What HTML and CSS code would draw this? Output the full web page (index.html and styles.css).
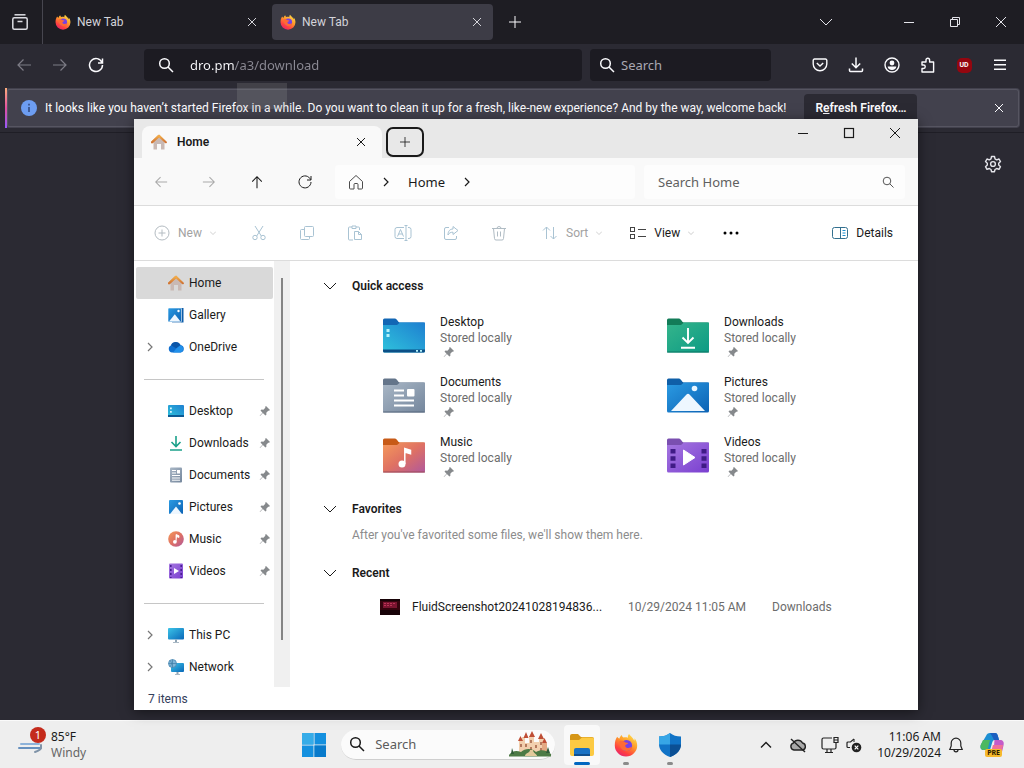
FILE: index.html
```html
<!DOCTYPE html>
<html lang="en">
<head>
  <meta charset="UTF-8" />
  <meta name="viewport" content="width=device-width, initial-scale=1" />
  <title>Desktop</title>
  <link rel="stylesheet" href="styles.css">
</head>
<body>

<!-- Shared icons -->
<svg class="sprite" aria-hidden="true">
  <defs>
    <linearGradient id="g-blue" x1="0" y1="0" x2="1" y2="1"><stop offset="0" stop-color="#3cc4e8"/><stop offset="1" stop-color="#0967b8"/></linearGradient>
    <linearGradient id="g-desk" x1="1" y1="0" x2="0" y2="1"><stop offset="0" stop-color="#1e7fd0"/><stop offset="1" stop-color="#2fc3dc"/></linearGradient>
    <linearGradient id="g-green" x1="0" y1="0" x2="1" y2="1"><stop offset="0" stop-color="#35b58b"/><stop offset="1" stop-color="#0c9a84"/></linearGradient>
    <linearGradient id="g-gray" x1="0" y1="0" x2="1" y2="1"><stop offset="0" stop-color="#a9b7c6"/><stop offset="1" stop-color="#74869c"/></linearGradient>
    <linearGradient id="g-pic" x1="0" y1="0" x2="1" y2="1"><stop offset="0" stop-color="#2b9be3"/><stop offset="1" stop-color="#0c62b4"/></linearGradient>
    <linearGradient id="g-music" x1="0" y1="0" x2="1" y2="1"><stop offset="0" stop-color="#f59a5a"/><stop offset=".5" stop-color="#df7163"/><stop offset="1" stop-color="#b0589c"/></linearGradient>
    <linearGradient id="g-video" x1="0" y1="0" x2="1" y2="1"><stop offset="0" stop-color="#a577e0"/><stop offset="1" stop-color="#7a3fd0"/></linearGradient>
    <linearGradient id="g-fox" x1=".8" y1="0" x2=".2" y2="1"><stop offset="0" stop-color="#ffe24a"/><stop offset=".4" stop-color="#ff9a2a"/><stop offset=".75" stop-color="#ff4040"/><stop offset="1" stop-color="#e0207a"/></linearGradient>
    <linearGradient id="g-roof" x1="0" y1="0" x2="0" y2="1"><stop offset="0" stop-color="#f3ad48"/><stop offset="1" stop-color="#cf7436"/></linearGradient>
  </defs>
  <symbol id="i-firefox" viewBox="0 0 24 24">
    <path d="M15 1c-1 1.200-1.300 2.400-1 3.700-1.400-.5-3-.6-4.400-.1C8.500 3.900 7.900 3 7.800 2 6.500 3 5.700 4.200 5.500 5.500 4.300 5.300 3.600 4.600 3.200 3.800 1.600 6 .8 8.700.8 12.500a11.200 11 0 0 0 22.400 0c0-3-1-5.600-2.700-7.300.2 1 .1 1.800-.2 2.500C19.200 4.500 16.400 3.400 15 1z" fill="url(#g-fox)"/>
    <circle cx="12.500" cy="12.500" r="5.600" fill="#7542e5"/>
    <path d="M5.500 8c2.500-.6 4.500 0 6 1.500l2.800.4c-.5 1.400-2.300 1.300-3 2.400-.4 1.500 1 3 3.200 2.600 1.500-.3 2.600-.9 3.800-.4-1.400 3.200-5.400 4.500-8.800 2.800C6.500 15.800 5 12 5.500 8z" fill="#ff6a34"/>
  </symbol>
  <symbol id="i-close" viewBox="0 0 12 12"><path d="M2 2l8 8M10 2l-8 8" fill="none" stroke="currentColor"/></symbol>
  <symbol id="i-plus" viewBox="0 0 12 12"><path d="M6 0v12M0 6h12" fill="none" stroke="currentColor"/></symbol>
  <symbol id="i-down" viewBox="0 0 12 12"><path d="M0 3l6 6 6-6" fill="none" stroke="currentColor"/></symbol>
  <symbol id="i-right" viewBox="0 0 12 12"><path d="M4 2l4 4-4 4" fill="none" stroke="currentColor" stroke-width="1.200"/></symbol>
  <symbol id="i-min" viewBox="0 0 12 12"><path d="M1 6.500h10" fill="none" stroke="currentColor"/></symbol>
  <symbol id="i-back" viewBox="0 0 16 16"><path d="M15 8H2M7.500 2.500L2 8l5.500 5.500" fill="none" stroke="currentColor" stroke-width="1.200"/></symbol>
  <symbol id="i-search" viewBox="0 0 16 16"><circle cx="6.500" cy="6.500" r="4.800" fill="none" stroke="currentColor" stroke-width="1.500"/><path d="M10 10l5 5" stroke="currentColor" stroke-width="1.500"/></symbol>
  <symbol id="i-reload" viewBox="0 0 16 16"><path d="M14 5.500A6.500 6.500 0 1 0 14.500 8M14.500 1.500v4.500H10" fill="none" stroke="currentColor" stroke-width="1.500"/></symbol>
  <symbol id="i-reload-thin" viewBox="0 0 16 16"><path d="M13.500 5.500A6 6 0 1 0 14 8M14 2v4h-4" fill="none" stroke="currentColor"/></symbol>
  <symbol id="i-pin" viewBox="0 0 12 12"><path d="M7 1l4 4-1 .8-.8-.1-1.900 2 .1 2-1 .9-2.500-2.500L1 11l-.3-.3L3.500 7.800 1.500 5.600l1-1 1.900.1 1.900-1.900L6.200 1.800z" fill="#86898c"/></symbol>
  <symbol id="i-house" viewBox="0 0 16 16">
    <path d="M2.500 8L8 3l5.500 5v7.500H10V10H6v5.500H2.500z" fill="#c9b9b4"/>
    <path d="M8 1.800L1 8.300" stroke="#dd8b3d" stroke-width="2.200" stroke-linecap="round"/>
    <path d="M1.200 8.200L8 1.900l6.800 6.300" fill="none" stroke="url(#g-roof)" stroke-width="2.200" stroke-linecap="round" stroke-linejoin="round"/>
  </symbol>
  <symbol id="i-pictures" viewBox="0 0 16 16"><rect x="1" y="1" width="14" height="14" rx="1" fill="url(#g-pic)"/><path d="M2 15l6-7.500 6 7.500z" fill="#eef7ff"/><circle cx="11.500" cy="4.500" r="1.300" fill="#fff"/></symbol>
  <symbol id="i-monitor" viewBox="0 0 16 16"><rect y="1" width="16" height="11.500" rx="1" fill="url(#g-blue)"/><path d="M7 12.500h2V15h2v.8H5V15h2z" fill="#8fa3b3"/></symbol>
  <symbol id="i-folder" viewBox="0 0 42 35"><path d="M0 2a1.500 1.500 0 0 1 1.500-1.500H12c2 0 3 4 5 4h23.500A1.500 1.500 0 0 1 42 6v5H0z" fill="currentColor"/></symbol>
</svg>

<!-- Browser -->
<div class="browser">
  <div class="tabbar">
    <button class="tab-view" aria-label="Firefox View">
      <svg width="18" height="18" viewBox="0 0 18 18" fill="none" stroke="#dcdce2" stroke-width="1.500"><path d="M3.500 1.800h11"/><rect x="1.800" y="4.800" width="14.400" height="11.400" rx="1.500"/><path d="M6.500 8.500h5"/></svg>
    </button>
    <div class="tab">
      <svg class="ic16"><use href="#i-firefox"/></svg>
      <button class="tab-title">New Tab</button>
      <button class="tab-close" aria-label="Close tab"><svg class="ic12"><use href="#i-close"/></svg></button>
    </div>
    <div class="tab active">
      <svg class="ic16"><use href="#i-firefox"/></svg>
      <button class="tab-title">New Tab</button>
      <button class="tab-close" aria-label="Close tab"><svg class="ic12"><use href="#i-close"/></svg></button>
    </div>
    <button class="new-tab" aria-label="New tab"><svg class="ic12"><use href="#i-plus"/></svg></button>
    <div class="window-buttons">
      <button class="list-tabs" aria-label="List all tabs"><svg class="ic12"><use href="#i-down"/></svg></button>
      <button aria-label="Minimize"><svg class="ic12"><use href="#i-min"/></svg></button>
      <button aria-label="Restore"><svg class="ic12" viewBox="0 0 12 12" fill="none" stroke="currentColor"><path d="M1.500 3.500h7v7h-7zM3.500 3.500v-2h7v7h-2"/></svg></button>
      <button aria-label="Close"><svg class="ic12" viewBox="0 0 12 12" fill="none" stroke="currentColor"><path d="M1 1l10 10M11 1L1 11"/></svg></button>
    </div>
  </div>

  <div class="toolbar">
    <button class="dim" aria-label="Back"><svg class="ic16"><use href="#i-back"/></svg></button>
    <button class="dim" aria-label="Forward"><svg class="ic16 flip"><use href="#i-back"/></svg></button>
    <button aria-label="Reload"><svg class="ic16"><use href="#i-reload"/></svg></button>
    <div class="urlbar">
      <svg class="ic16"><use href="#i-search"/></svg>
      <input type="text" class="url-input" aria-label="Address" value="dro.pm/a3/download" />
    </div>
    <div class="searchbar">
      <svg class="ic16"><use href="#i-search"/></svg>
      <input type="text" aria-label="Web search" placeholder="Search" />
    </div>
    <div class="tools">
      <button aria-label="Pocket"><svg class="ic16" viewBox="0 0 16 16" fill="none" stroke="currentColor" stroke-width="1.400"><path d="M2.500 2h11a1.300 1.300 0 0 1 1.300 1.300V7a6.800 6.800 0 0 1-13.600 0V3.300A1.300 1.300 0 0 1 2.500 2z"/><path d="M4.800 6L8 9l3.200-3"/></svg></button>
      <button aria-label="Downloads"><svg class="ic16" viewBox="0 0 16 16" fill="none" stroke="currentColor" stroke-width="1.500"><path d="M8 .5v10M3.800 6.500L8 10.700l4.200-4.200M1.500 11.500v2a1 1 0 0 0 1 1h11a1 1 0 0 0 1-1v-2"/></svg></button>
      <button aria-label="Account"><svg class="ic16" viewBox="0 0 16 16"><circle cx="8" cy="8" r="7" fill="none" stroke="currentColor" stroke-width="1.400"/><circle cx="8" cy="6" r="2.400" fill="currentColor"/><path d="M3.700 9.500h8.600c0 2-2 3.500-4.300 3.500s-4.300-1.500-4.300-3.500z" fill="currentColor"/></svg></button>
      <button aria-label="Extensions"><svg class="ic16" viewBox="0 0 16 16" fill="none" stroke="currentColor" stroke-width="1.400" stroke-linejoin="round"><path d="M2 5h4V3a1.800 1.800 0 0 1 3.600 0v2h4v10H2v-3.500h1.500a1.600 1.600 0 0 0 0-3.500H2z"/></svg></button>
      <button aria-label="uBlock Origin"><span class="ublock">UD</span></button>
      <button aria-label="Menu"><svg class="ic16" viewBox="0 0 16 16" stroke="currentColor" stroke-width="1.500"><path d="M2 3.300h12M2 7.800h12M2 12.300h12"/></svg></button>
    </div>
  </div>

  <div class="infobar">
    <svg class="ic16" viewBox="0 0 16 16"><circle cx="8" cy="8" r="8" fill="#6d9df2"/><path d="M8 7v5M8 3.800v1.700" stroke="#2f4678" stroke-width="1.500"/></svg>
    <p>It looks like you haven’t started Firefox in a while. Do you want to clean it up for a fresh, like-new experience? And by the way, welcome back!</p>
    <button class="refresh">R<u>e</u>fresh Firefox…</button>
    <button class="infobar-close" aria-label="Dismiss"><svg class="ic12"><use href="#i-close"/></svg></button>
    <span class="ghost"></span>
  </div>

  <div class="page">
    <button class="gear" aria-label="Customize new tab">
      <svg width="18" height="18" viewBox="0 0 18 18" fill="none" stroke="#e4e4ea" stroke-width="1.400" stroke-linejoin="round"><path d="M7.500 1.500h3l.5 2.300 1.700 1 2.300-.8 1.500 2.600-1.800 1.600v1.900l1.800 1.600-1.500 2.600-2.300-.8-1.700 1-.5 2.200h-3L7 14.500l-1.700-1-2.300.8-1.500-2.600 1.800-1.600V8.200L1.500 6.600 3 4l2.300.8 1.700-1z"/><circle cx="9" cy="9" r="2.400"/></svg>
    </button>
  </div>
</div>

<!-- File Explorer window -->
<main class="explorer">
  <div class="titlebar">
    <div class="ex-tab">
      <svg class="ic16"><use href="#i-house"/></svg>
      <span>Home</span>
      <button aria-label="Close tab"><svg class="ic12"><use href="#i-close"/></svg></button>
    </div>
    <button class="ex-new" aria-label="Add new tab"><svg class="ic10"><use href="#i-plus"/></svg></button>
    <div class="ex-buttons">
      <button aria-label="Minimize"><svg class="ic12"><use href="#i-min"/></svg></button>
      <button aria-label="Maximize"><svg class="ic12" viewBox="0 0 12 12"><rect x="1.500" y="1.500" width="9" height="9" fill="none" stroke="currentColor" stroke-width="1.200"/></svg></button>
      <button aria-label="Close"><svg class="ic12" viewBox="0 0 12 12" fill="none" stroke="currentColor"><path d="M1 1l10 10M11 1L1 11"/></svg></button>
    </div>
  </div>

  <div class="navrow">
    <button class="off" aria-label="Back"><svg class="ic14"><use href="#i-back"/></svg></button>
    <button class="off" aria-label="Forward"><svg class="ic14 flip"><use href="#i-back"/></svg></button>
    <button aria-label="Up"><svg class="ic14 turn"><use href="#i-back"/></svg></button>
    <button aria-label="Refresh"><svg class="ic16"><use href="#i-reload-thin"/></svg></button>
    <nav class="address" aria-label="Path">
      <svg class="ic16" viewBox="0 0 16 16" fill="none" stroke="#4c4c4c"><path d="M1.500 7.500L8 1.500l6.500 6V14a1 1 0 0 1-1 1H10v-4.500a1 1 0 0 0-1-1H7a1 1 0 0 0-1 1V15H2.500a1 1 0 0 1-1-1z"/></svg>
      <svg class="ic12"><use href="#i-right"/></svg>
      <a href="#">Home</a>
      <svg class="ic12"><use href="#i-right"/></svg>
    </nav>
    <div class="ex-search">
      <input type="text" aria-label="Search Home" placeholder="Search Home" />
      <svg class="ic12" viewBox="0 0 12 12" fill="none" stroke="#555"><circle cx="5" cy="5" r="3.800"/><path d="M7.800 7.800l3.700 3.700"/></svg>
    </div>
  </div>

  <div class="commands">
    <button class="cmd-new" disabled><svg class="ic16" viewBox="0 0 16 16" fill="none" stroke="#b4bcc2"><circle cx="8" cy="8" r="7"/><path d="M8 4.500v7M4.500 8h7"/></svg>New<svg class="ic6"><use href="#i-down"/></svg></button>
    <button class="cmd" disabled aria-label="Cut"><svg class="ic16" viewBox="0 0 16 16" fill="none" stroke="#a9c3d3"><path d="M4 1l6.300 10M12 1L5.700 11"/><circle cx="4" cy="12.500" r="2.200"/><circle cx="12" cy="12.500" r="2.200"/></svg></button>
    <button class="cmd" disabled aria-label="Copy"><svg class="ic16" viewBox="0 0 16 16" fill="none" stroke="#a9c3d3"><rect x="5.500" y="1.500" width="9" height="10" rx="1"/><path d="M5.500 4.500h-3a1 1 0 0 0-1 1v8a1 1 0 0 0 1 1h7a1 1 0 0 0 1-1v-2"/></svg></button>
    <button class="cmd" disabled aria-label="Paste"><svg class="ic16" viewBox="0 0 16 16" fill="none" stroke="#a9c3d3"><path d="M6 15H2.500a1 1 0 0 1-1-1V3a1 1 0 0 1 1-1H5M9 2h2.500a1 1 0 0 1 1 1v2M5 1h4v2.500H5z"/><path d="M7.500 6.500h4l3 3v5h-7zM11.500 6.500v3h3"/></svg></button>
    <button class="cmd" disabled aria-label="Rename"><svg class="ic18" viewBox="0 0 18 16" fill="none" stroke="#a9c3d3"><path d="M10 2.500H3a2 2 0 0 0-2 2v7a2 2 0 0 0 2 2h7M14 2.500h1a2 2 0 0 1 2 2v7a2 2 0 0 1-2 2h-1M12 .5v15M10.500.5h3M10.500 15.500h3M3.500 11.500l3-7 3 7M4.500 9h4"/></svg></button>
    <button class="cmd" disabled aria-label="Share"><svg class="ic16" viewBox="0 0 16 16" fill="none" stroke="#a9c3d3"><path d="M6 2.500H3a1.500 1.500 0 0 0-1.500 1.500v9A1.500 1.500 0 0 0 3 14.500h9a1.500 1.500 0 0 0 1.500-1.500v-2M10 1.500l5 4-5 4v-2.300c-2.500 0-4 .8-5 2.800 0-4 2-6 5-6z"/></svg></button>
    <button class="cmd" disabled aria-label="Delete"><svg class="ic16" viewBox="0 0 16 16" fill="none" stroke="#b0bcc4"><path d="M1 3.500h14M6 3.500a2 2 0 0 1 4 0M2.500 3.500l1 10a1.500 1.500 0 0 0 1.500 1.500h6a1.500 1.500 0 0 0 1.500-1.500l1-10M6.500 6.500v5M9.500 6.500v5"/></svg></button>
    <button class="cmd-sort" disabled><svg class="ic16" viewBox="0 0 16 16" fill="none" stroke="#a9c3d3"><path d="M4.500 14V2M1 5.500L4.500 2 8 5.500M11.500 2v12M8.500 11l3 3 3-3"/></svg>Sort<svg class="ic6"><use href="#i-down"/></svg></button>
    <button class="cmd-view"><svg class="ic16" viewBox="0 0 16 16" fill="none" stroke="#444"><rect x=".5" y="2.500" width="4" height="4"/><rect x=".5" y="9.500" width="4" height="4"/><path d="M8 4.500h8M8 11.500h8"/></svg>View<svg class="ic6 faint"><use href="#i-down"/></svg></button>
    <button class="cmd-more" aria-label="See more"><svg width="18" height="4" viewBox="0 0 18 4"><circle cx="3" cy="2" r="1.500"/><circle cx="9" cy="2" r="1.500"/><circle cx="15" cy="2" r="1.500"/></svg></button>
    <button class="cmd-details"><svg class="ic16" viewBox="0 0 16 16" fill="none" stroke="#33708f"><rect x=".5" y="2.500" width="15" height="11" rx="2"/><path d="M8.500 2.500v11" /><path d="M10.500 5.500h3M10.500 8h3M10.500 10.500h3" stroke="#1f8fcf"/></svg>Details</button>
  </div>

  <div class="ex-body">
    <nav class="sidebar" aria-label="Folders">
      <a href="#" class="side selected"><svg class="ic16"><use href="#i-house"/></svg>Home</a>
      <a href="#" class="side"><svg class="ic16" viewBox="0 0 16 16"><path d="M4 1h11.500v14.500H4z" fill="#0d5ca8"/><rect y="1" width="13.500" height="14" rx="1" fill="url(#g-pic)" stroke="#fff" stroke-width=".6"/><path d="M1 14.500l5.800-7.200 5.700 7.200z" fill="#eef7ff"/><circle cx="10.500" cy="4" r="1.200" fill="#fff"/></svg>Gallery</a>
      <a href="#" class="side has-sub"><svg class="ic12"><use href="#i-right"/></svg><svg class="ic16" viewBox="0 0 16 16"><path d="M4 13.500a3.800 3.800 0 0 1-.8-7.300A5.200 5.200 0 0 1 12.500 6a3.800 3.800 0 0 1 .2 7.500z" fill="#0f6fd0"/><path d="M3 6.300A5.200 5.200 0 0 1 12.500 6l-4 3.600z" fill="#0b55a8"/><path d="M5 13.500l3.500-4.200 4-3a3.800 3.800 0 0 1 .2 7.200z" fill="#2290ea"/></svg>OneDrive</a>
      <hr>
      <a href="#" class="side"><svg class="ic16" viewBox="0 0 16 16"><rect y="2" width="16" height="12" rx="1" fill="url(#g-desk)"/><path d="M2 4.500h1.800v1.800H2zM2 8h1.800v1.800H2z" fill="#d8f6ff"/><path d="M0 12h16v2H0z" fill="#0c5a94"/></svg>Desktop<svg class="ic12 pin"><use href="#i-pin"/></svg></a>
      <a href="#" class="side"><svg class="ic16" viewBox="0 0 16 16" fill="none" stroke="#1ba18a" stroke-width="1.600"><path d="M8 1v10.500M3.500 7L8 11.500 12.500 7M2 15h12"/></svg>Downloads<svg class="ic12 pin"><use href="#i-pin"/></svg></a>
      <a href="#" class="side"><svg class="ic16" viewBox="0 0 16 16"><rect x="2" y=".5" width="12" height="15" rx="1" fill="url(#g-gray)"/><path d="M4 3.500h4M4 6h4M4 8.500h8M4 11h8M4 13.200h8" stroke="#fff"/><path d="M9 3h3v3.500H9z" fill="#fff"/></svg>Documents<svg class="ic12 pin"><use href="#i-pin"/></svg></a>
      <a href="#" class="side"><svg class="ic16"><use href="#i-pictures"/></svg>Pictures<svg class="ic12 pin"><use href="#i-pin"/></svg></a>
      <a href="#" class="side"><svg class="ic16" viewBox="0 0 16 16"><circle cx="8" cy="8" r="7.800" fill="url(#g-music)"/><path d="M8 10.500V3.500l3 1.200v1.800L9 5.800" fill="#fff" stroke="#fff" stroke-width=".8"/><circle cx="6.900" cy="10.800" r="1.900" fill="#fff"/></svg>Music<svg class="ic12 pin"><use href="#i-pin"/></svg></a>
      <a href="#" class="side"><svg class="ic16" viewBox="0 0 16 16"><rect x="1" y=".5" width="14" height="15" rx="1" fill="url(#g-video)"/><path d="M2.800 2v13M13.200 2v13" stroke="#4a1f94" stroke-width="1.600" stroke-dasharray="2 2"/><path d="M6 5l5 3-5 3z" fill="#fff"/></svg>Videos<svg class="ic12 pin"><use href="#i-pin"/></svg></a>
      <hr>
      <a href="#" class="side has-sub"><svg class="ic12"><use href="#i-right"/></svg><svg class="ic16"><use href="#i-monitor"/></svg>This PC</a>
      <a href="#" class="side has-sub"><svg class="ic12"><use href="#i-right"/></svg><svg class="ic16" viewBox="0 0 16 16"><rect x="3" y="4" width="13" height="9" rx="1" fill="url(#g-blue)"/><path d="M8.500 13h2v2h1.500v.8H7V15h1.500z" fill="#8fa3b3"/><circle cx="4.500" cy="4.500" r="4" fill="#7fb6d8" stroke="#4383ae" stroke-width=".7"/><path d="M.5 4.500h8M4.500.5v8M2 1.500c2 2 2 4 0 6" fill="none" stroke="#3f7ca6" stroke-width=".7"/></svg>Network</a>
    </nav>
    <div class="scroll"><div class="thumb"></div></div>

    <div class="content">
      <h2><svg class="ic12"><use href="#i-down"/></svg>Quick access</h2>
      <div class="tiles">
        <div class="tile">
          <svg class="folder" viewBox="0 0 42 35"><use href="#i-folder" color="#1266b4"/><path d="M0 7h14l3-2.500h25V33a1.500 1.500 0 0 1-1.500 1.500h-39A1.500 1.500 0 0 1 0 33z" fill="url(#g-desk)"/><path d="M0 31.500h42V33a1.500 1.500 0 0 1-1.500 1.500h-39A1.500 1.500 0 0 1 0 33z" fill="#0b4f86"/><path d="M3.500 11h3v3h-3zM3.500 16h3v3h-3zM33 32h2v1.800h-2zM37 32h2v1.800h-2z" fill="#b5f2fb"/></svg>
          <div class="tile-text"><span>Desktop</span><small>Stored locally</small><svg class="ic12"><use href="#i-pin"/></svg></div>
        </div>
        <div class="tile">
          <svg class="folder" viewBox="0 0 42 35"><use href="#i-folder" color="#137c58"/><path d="M0 7h14l3-2.500h25V33a1.500 1.500 0 0 1-1.500 1.500h-39A1.500 1.500 0 0 1 0 33z" fill="url(#g-green)"/><path d="M0 34h42" stroke="#0b7463"/><path d="M21 10v14.500M15.500 19.500l5.500 5.500 5.500-5.500M14 29.800h14" fill="none" stroke="#fff" stroke-width="1.900"/></svg>
          <div class="tile-text"><span>Downloads</span><small>Stored locally</small><svg class="ic12"><use href="#i-pin"/></svg></div>
        </div>
        <div class="tile">
          <svg class="folder" viewBox="0 0 42 35"><use href="#i-folder" color="#64758a"/><path d="M0 7h14l3-2.500h25V33a1.500 1.500 0 0 1-1.500 1.500h-39A1.500 1.500 0 0 1 0 33z" fill="url(#g-gray)"/><path d="M0 34h42" stroke="#56677c"/><path d="M11 12.500h10M11 17.500h10M11 22.500h20M11 27.500h20" stroke="#fff" stroke-width="2.200"/><rect x="24" y="11" width="7.500" height="7.500" rx="1" fill="#fff"/></svg>
          <div class="tile-text"><span>Documents</span><small>Stored locally</small><svg class="ic12"><use href="#i-pin"/></svg></div>
        </div>
        <div class="tile">
          <svg class="folder" viewBox="0 0 42 35"><use href="#i-folder" color="#0f5fa8"/><path d="M0 7h14l3-2.500h25V33a1.500 1.500 0 0 1-1.500 1.500h-39A1.500 1.500 0 0 1 0 33z" fill="url(#g-pic)"/><path d="M4 33l15.500-16.500a2 2 0 0 1 3 0L38 33z" fill="#eef7ff"/><circle cx="27.500" cy="10.500" r="2.800" fill="#e8f5ff"/></svg>
          <div class="tile-text"><span>Pictures</span><small>Stored locally</small><svg class="ic12"><use href="#i-pin"/></svg></div>
        </div>
        <div class="tile">
          <svg class="folder" viewBox="0 0 42 35"><use href="#i-folder" color="#c75a17"/><path d="M0 7h14l3-2.500h25V33a1.500 1.500 0 0 1-1.500 1.500h-39A1.500 1.500 0 0 1 0 33z" fill="url(#g-music)"/><path d="M0 34h42" stroke="#9a4a58"/><circle cx="19" cy="26" r="3.500" fill="#fff"/><path d="M21.800 26V10.500l5.700 1.800v3.500l-5.700-1.800" fill="#fff" stroke="#fff" stroke-width="1.500"/></svg>
          <div class="tile-text"><span>Music</span><small>Stored locally</small><svg class="ic12"><use href="#i-pin"/></svg></div>
        </div>
        <div class="tile">
          <svg class="folder" viewBox="0 0 42 35"><use href="#i-folder" color="#7a4fb0"/><path d="M0 7h14l3-2.500h25V33a1.500 1.500 0 0 1-1.500 1.500h-39A1.500 1.500 0 0 1 0 33z" fill="url(#g-video)"/><path d="M6 11v19M37 11v19" stroke="#401b86" stroke-width="5" stroke-dasharray="4.500 2.700"/><path d="M16.500 12l11.500 7.500-11.500 7.500z" fill="#fff" stroke="#fff" stroke-linejoin="round"/></svg>
          <div class="tile-text"><span>Videos</span><small>Stored locally</small><svg class="ic12"><use href="#i-pin"/></svg></div>
        </div>
      </div>

      <h2><svg class="ic12"><use href="#i-down"/></svg>Favorites</h2>
      <p class="hint">After you've favorited some files, we'll show them here.</p>

      <h2><svg class="ic12"><use href="#i-down"/></svg>Recent</h2>
      <table class="recent">
        <tr>
          <td class="shot"><svg width="20" height="16" viewBox="0 0 20 16"><path d="M0 0h20v16H0z" fill="#35040e"/><path d="M0 0h20v2H0zM0 11h20v5H0z" fill="#170207"/><path d="M3 3h14v6H3z" fill="#7a1430"/><path d="M4 4.500h12M4 6.500h9" stroke="#b93355" stroke-dasharray="2 1"/></svg></td>
          <td class="name">FluidScreenshot20241028194836...</td>
          <td class="date">10/29/2024 11:05 AM</td>
          <td>Downloads</td>
        </tr>
      </table>
    </div>
  </div>

  <div class="status">7 items</div>
</main>

<!-- Taskbar -->
<footer class="taskbar">
  <button class="weather">
    <span class="wind">
      <svg width="26" height="20" viewBox="0 0 26 20" fill="none" stroke-linecap="round"><path d="M3 9h18" stroke="#8db2d9" stroke-width="2"/><path d="M1 13h22" stroke="#6690be" stroke-width="2"/><path d="M23 10v3c0 1-3 3-6 4" stroke="#7f93a8" stroke-width="2"/></svg>
      <b>1</b>
    </span>
    <span class="weather-text">85°F<small>Windy</small></span>
  </button>
  <div class="apps">
    <button class="start" aria-label="Start"><svg width="24" height="24" viewBox="0 0 24 24"><path d="M0 0h11.500v11.500H0zM12.500 0H24v11.500H12.500zM0 12.500h11.500V24H0zM12.500 12.500H24V24H12.500z" fill="#1490df"/><path d="M0 0h11.500v11.500H0z" fill="#36ace8"/><path d="M12.500 12.500H24V24H12.500z" fill="#087acb"/></svg></button>
    <div class="task-search">
      <svg class="ic16"><use href="#i-search"/></svg>
      <input type="text" aria-label="Search the taskbar" placeholder="Search" />
      <svg width="42" height="26" viewBox="0 0 42 26">
        <path d="M10 23V10h3V6h3v6h4V5h5v6h5V7h5v16z" fill="#f2cfae"/>
        <path d="M9 10l2.500-5 2.500 5zM14.500 7L17 1l2.500 6zM20 6l3-6 3 6zM29 8l3-6 3 6zM33 12l2.500-5 2.500 5z" fill="#bf4e35"/>
        <path d="M12 13v3M17 13v3M22 9v3M22 16v4M27 14v3M32 11v3M32 17v3" stroke="#9b553c" stroke-width="1.400"/>
        <path d="M33 12h5v10h-5z" fill="#e3a983"/>
        <path d="M0 24c3-4 7-5 12-3 4-4 11-4 15 0 5-3 10-2 15 2v2.500H0z" fill="#4c7a45"/>
        <path d="M2 23l1-6 2 6zM37 22l2-6 2 6z" fill="#2f5a38"/>
        <path d="M16 25c0-3 5-3 5-6h3c0 3 4 4 4 6z" fill="#e2c99b"/>
      </svg>
    </div>
    <button class="app open" aria-label="File Explorer"><svg width="26" height="26" viewBox="0 0 26 26"><path d="M1 4a2 2 0 0 1 2-2h6l3 3h11a2 2 0 0 1 2 2v6H1z" fill="#d69617"/><path d="M1 8h9l3-2.500h10.500A1.500 1.500 0 0 1 25 7v15a2 2 0 0 1-2 2H3a2 2 0 0 1-2-2z" fill="#fcca43"/><path d="M5 24v-6a2 2 0 0 1 2-2h12a2 2 0 0 1 2 2v6z" fill="#1a72c4"/><path d="M5 22h16v2H5z" fill="#10508f"/></svg></button>
    <button class="app" aria-label="Firefox"><svg width="24" height="24"><use href="#i-firefox"/></svg></button>
    <button class="app" aria-label="Windows Security"><svg width="24" height="24" viewBox="0 0 24 24"><path d="M12 0c3 2.500 6.500 3.500 11 3.500V11c0 6-4 10.500-11 13C5 21.500 1 17 1 11V3.500C5.500 3.500 9 2.500 12 0z" fill="#1173c6"/><path d="M12 0v11.500H1v-8C5.500 3.500 9 2.500 12 0z" fill="#37a6e6"/><path d="M12 11.500h11C22.800 17 19 21.500 12 24z" fill="#0b4f94"/></svg></button>
  </div>
  <div class="tray">
    <button aria-label="Show hidden icons"><svg class="ic12" viewBox="0 0 12 12"><path d="M1 8.500l5-5 5 5" fill="none" stroke="currentColor" stroke-width="1.400"/></svg></button>
    <button aria-label="OneDrive"><svg class="ic18" viewBox="0 0 18 16" fill="#a9a9a9" stroke="#222" stroke-width="1.400"><path d="M5 13a3.600 3.600 0 0 1-.6-7A5.200 5.200 0 0 1 13.500 6a3.600 3.600 0 0 1 .2 7z"/><path d="M2 2l14 13"/></svg></button>
    <button aria-label="Network"><svg class="ic18" viewBox="0 0 18 18" fill="none" stroke="#222" stroke-width="1.200"><path d="M11 2H2.500A1.500 1.500 0 0 0 1 3.500v8A1.500 1.500 0 0 0 2.500 13h11a1.500 1.500 0 0 0 1.500-1.500V9M6 13v3.500M10 13v3.500M4 16.500h8M13 1.500h4v5h-4zM15 6.500V9M13 4h4"/></svg></button>
    <button aria-label="Volume"><svg class="ic16" viewBox="0 0 16 16"><path d="M8 2L4.500 5H2a1 1 0 0 0-1 1v3.500a1 1 0 0 0 1 1h2" fill="none" stroke="#222" stroke-width="1.200"/><path d="M8 2v3" stroke="#222"/><circle cx="10.500" cy="10.500" r="4.800" fill="#222"/><path d="M8.700 8.700l3.600 3.600M12.300 8.700l-3.600 3.600" stroke="#fff" stroke-width="1.200"/></svg></button>
    <button class="clock">11:06 AM<br>10/29/2024</button>
    <button aria-label="Notifications"><svg class="ic16" viewBox="0 0 16 16" fill="none" stroke="#222" stroke-width="1.200"><path d="M8 1.200a4.800 4.800 0 0 0-4.800 4.800v3L1.800 12.500h12.400L12.800 9V6A4.800 4.800 0 0 0 8 1.200zM6 12.800a2 2 0 0 0 4 0"/></svg></button>
    <button class="copilot" aria-label="Copilot">
      <svg width="24" height="24" viewBox="0 0 24 24"><path d="M6 3c.7-2 2-3 4-3h5c2 0 2.500 1.500 3.200 4L19 7h-4c-1.500 0-2.300.8-2.800 2.500L10 17H4c-3 0-4-2-3.300-5z" fill="#1c8fd2"/><path d="M10 0h5c2 0 2.500 1.500 3.200 4L19 7h-5L12 3z" fill="#1d5fc0"/><path d="M.7 12L3 7h7L7.500 17H4c-3 0-4-2-3.300-5z" fill="#4cb860"/><path d="M14.500 7H20c3 0 4.300 2 3.600 5L22 19c-.6 2-2 3-4 3h-7c1.500 0 2-1.500 2.500-3z" fill="#c45bc9"/><path d="M13 12h10l-1.500 7H11z" fill="#f0709a"/></svg>
      <b>PRE</b>
    </button>
  </div>
</footer>

</body>
</html>
```
FILE: styles.css
```css
/* Reset */
* {
  margin: 0;
  padding: 0;
  box-sizing: border-box;
}
body {
  height: 100vh;
  display: flex;
  flex-direction: column;
  overflow: hidden;
  position: relative;
  font-family: Roboto, "Open Sans", sans-serif;
  font-size: 12px;
  line-height: 16px;
  background: #2b2a33;
}
button {
  border: none;
  background: none;
  font: inherit;
  color: inherit;
  display: flex;
  align-items: center;
  justify-content: center;
}
input {
  border: none;
  outline: none;
  background: none;
  font: inherit;
  color: inherit;
  min-width: 0;
  flex: 1;
}
a {
  color: inherit;
  text-decoration: none;
}
svg {
  display: block;
  flex: none;
  overflow: visible;
}
.sprite {
  position: absolute;
  width: 0;
  height: 0;
}
.ic6 { width: 6px; height: 6px; }
.ic10 { width: 10px; height: 10px; }
.ic12 { width: 12px; height: 12px; }
.ic14 { width: 14px; height: 14px; }
.ic16 { width: 16px; height: 16px; }
.ic18 { width: 18px; height: 18px; }
.flip { transform: scaleX(-1); }
.turn { transform: rotate(90deg); }
.faint { color: #999; }

/* Browser */
.browser {
  flex: 1;
  display: flex;
  flex-direction: column;
  color: #fbfbfe;
}
.tabbar {
  display: flex;
  align-items: center;
  gap: 4px;
  height: 44px;
  background: #1e1d23;
}
.tab-view {
  width: 43px;
  height: 44px;
  padding-right: 2px;
  border-right: 1px solid #47464f;
}
.tab {
  flex: 0 1 221px;
  height: 36px;
  display: flex;
  align-items: center;
  gap: 6px;
  padding: 0 10px 0 8px;
  border-radius: 4px;
  color: #d4d4da;
}
.tab.active {
  background: #3d3c46;
}
.tab-title {
  flex: 1;
  justify-content: flex-start;
}
.new-tab {
  width: 36px;
  height: 36px;
}
.window-buttons {
  display: flex;
  margin-left: auto;
  color: #e4e4ea;
}
.window-buttons button {
  width: 46px;
  height: 44px;
}
.window-buttons .list-tabs {
  width: 36px;
  margin-right: 42px;
}
.toolbar {
  display: flex;
  align-items: center;
  height: 44px;
  padding: 0 6px 2px;
}
.toolbar button {
  width: 36px;
  height: 32px;
}
.toolbar .dim {
  color: #7d7c86;
}
.urlbar,
.searchbar {
  display: flex;
  align-items: center;
  min-width: 0;
  height: 32px;
  border-radius: 4px;
  background: #1c1b22;
}
.urlbar {
  flex: 1;
  gap: 16px;
  margin-left: 30px;
  padding: 0 14px;
  font-family: "Noto Sans", sans-serif;
  font-size: 13px;
}
.url-input {
  /* host is bright, the path is dimmed */
  background: linear-gradient(to right, #fbfbfe 44px, #8b8a94 44px);
  -webkit-background-clip: text;
  background-clip: text;
  -webkit-text-fill-color: transparent;
}
.searchbar {
  flex: 0 1 181px;
  gap: 6px;
  margin: 0 31px 0 8px;
  padding: 0 9px;
  font-family: "Noto Sans", sans-serif;
  font-size: 13px;
}
.searchbar input::placeholder {
  color: #a9a8b2;
}
.tools {
  display: flex;
}
.ublock {
  width: 15px;
  height: 15px;
  border-radius: 5px;
  background: #94060f;
  font-size: 7px;
  font-weight: 700;
  line-height: 15px;
}
.infobar {
  position: relative;
  display: flex;
  align-items: center;
  height: 40px;
  margin: 0 4px 0 5px;
  padding: 0 14px;
  border: 1px solid #5a5964;
  border-left: 2px solid;
  border-image: linear-gradient(#ffb37a, #e24fa0, #9059ff) 1;
  border-image-width: 0 0 0 2px;
  border-radius: 4px;
  background: #42414d;
  box-shadow: inset 0 0 0 1px #565561;
}
.infobar p {
  margin-left: 8px;
  white-space: nowrap;
}
.refresh {
  height: 28px;
  margin-left: 18px;
  padding: 0 11px;
  border-radius: 4px;
  background: #2b2a33;
  font-weight: 600;
  white-space: nowrap;
}
.infobar-close {
  margin-left: auto;
}
.ghost {
  position: absolute;
  left: 230px;
  top: -6px;
  width: 50px;
  height: 26px;
  background: rgba(160, 160, 160, 0.2);
}
.page {
  flex: 1;
  display: flex;
  justify-content: flex-end;
  align-items: flex-start;
  margin-top: 4px;
  padding: 22px 22px 0;
  border-top: 1px solid #1f1e26;
  background: #2b2a33;
}

/* File Explorer */
.explorer {
  position: absolute;
  left: 134px;
  top: 119px;
  right: 106px;
  bottom: 58px;
  display: flex;
  flex-direction: column;
  background: #fff;
  color: #1a1a1a;
  box-shadow: 0 2px 12px rgba(0, 0, 0, 0.5);
}
.titlebar {
  display: flex;
  align-items: flex-end;
  height: 39px;
  padding-left: 8px;
  background: #e8e8e8;
}
.ex-tab {
  display: flex;
  align-items: center;
  gap: 10px;
  width: 240px;
  height: 32px;
  padding: 0 15px 0 9px;
  border-radius: 8px 8px 0 0;
  background: #f9f9f9;
  font-weight: 600;
}
.ex-tab button {
  margin-left: auto;
}
.ex-new {
  width: 38px;
  height: 30px;
  margin-left: 4px;
  margin-bottom: 1px;
  border: 2px solid #1a1a1a;
  border-radius: 7px;
}
.ex-buttons {
  display: flex;
  align-self: flex-start;
  margin-left: auto;
}
.ex-buttons button {
  width: 46px;
  height: 28px;
}
.navrow {
  display: flex;
  align-items: center;
  height: 48px;
  padding: 0 13px 0 3px;
  border-bottom: 1px solid #dcdcdc;
  background: #f9f9f9;
}
.navrow button {
  width: 48px;
  height: 32px;
}
.navrow .off {
  color: #aaa;
}
.address,
.ex-search {
  display: flex;
  align-items: center;
  height: 34px;
  border-radius: 4px;
  background: #fdfdfd;
  font-family: "Noto Sans", sans-serif;
  font-size: 13px;
}
.address {
  flex: 1;
  gap: 16px;
  margin: 0 9px 0 6px;
  padding-left: 13px;
}
.ex-search {
  flex: 0 1 261px;
  padding: 0 11px 0 14px;
}
.ex-search input::placeholder {
  color: #606060;
}
.commands {
  display: flex;
  align-items: center;
  height: 55px;
  padding: 0 25px 0 20px;
  border-bottom: 1px solid #dcdcdc;
}
.commands button {
  gap: 8px;
}
.commands button:disabled {
  color: #a2a2a2;
}
.commands .cmd-new {
  width: 62px;
  margin-right: 19px;
}
.commands .cmd {
  width: 48px;
}
.commands .cmd-sort {
  margin-left: 19px;
}
.commands .cmd-view {
  margin-left: 28px;
}
.commands .cmd-more {
  margin-left: 28px;
}
.commands .cmd-details {
  margin-left: auto;
}
.ex-body {
  flex: 1;
  min-height: 0;
  display: flex;
}
.sidebar {
  width: 140px;
  padding: 6px 1px 0 2px;
}
.side {
  display: flex;
  align-items: center;
  gap: 5px;
  height: 32px;
  padding: 0 2px 0 32px;
  border-radius: 2px;
}
.side.selected {
  background: #d9d9d9;
}
.side.has-sub {
  padding-left: 8px;
}
.side.has-sub .ic12 {
  margin-right: 7px;
  color: #777;
}
.side .pin {
  margin-left: auto;
}
.sidebar hr {
  height: 1px;
  margin: 16px 9px 15px 8px;
  border: none;
  background: #c6c6c6;
}
.scroll {
  width: 16px;
  padding: 17px 7px 47px;
  background: #f0f0f0;
}
.thumb {
  width: 2px;
  height: 100%;
  background: #858585;
}
.content {
  flex: 1;
  padding: 13px 34px 0;
}
.content h2 {
  display: flex;
  align-items: center;
  gap: 16px;
  height: 24px;
  font-size: 12px;
  font-weight: 600;
}
.tiles {
  display: grid;
  grid-template-columns: 284px 1fr;
  grid-auto-rows: 60px;
  margin: 16px 0 3px;
  padding-left: 59px;
}
.tile {
  display: flex;
  gap: 15px;
}
.folder {
  width: 42px;
  height: 35px;
  margin-top: 4px;
}
.tile-text {
  display: flex;
  flex-direction: column;
}
.tile-text small {
  font-size: 12px;
  color: #6c6c6c;
}
.tile-text .ic12 {
  margin-left: 3px;
}
.hint {
  margin: 6px 0 18px 28px;
  color: #8c8c8c;
}
.recent {
  margin: 12px 0 0 56px;
  border-collapse: collapse;
  color: #6c6c6c;
  white-space: nowrap;
}
.recent td {
  padding: 2px 26px 2px 0;
}
.recent .shot {
  padding-right: 12px;
}
.recent .name {
  color: #1a1a1a;
}
.status {
  height: 23px;
  padding: 4px 14px 0;
  color: #34405c;
}

/* Taskbar */
.taskbar {
  display: flex;
  align-items: center;
  height: 48px;
  padding: 0 18px;
  border-top: 1px solid #fafafa;
  background: #eeeeee;
  color: #1a1a1a;
  font-family: "Noto Sans", sans-serif;
}
.weather {
  gap: 7px;
  text-align: left;
}
.weather small {
  display: block;
  font-size: 12px;
  color: #666;
}
.wind {
  position: relative;
  display: flex;
}
.wind b {
  position: absolute;
  left: 12px;
  top: -8px;
  width: 16px;
  height: 16px;
  border-radius: 8px;
  background: #c42b1c;
  color: #fff;
  font-size: 11px;
  font-weight: 400;
  text-align: center;
}
.apps {
  display: flex;
  align-items: center;
  margin-left: auto;
}
.task-search {
  display: flex;
  align-items: center;
  gap: 10px;
  width: 214px;
  height: 30px;
  margin: 0 9px 0 15px;
  padding: 0 4px 0 8px;
  border-bottom: 1px solid #cfcfcf;
  border-radius: 15px;
  background: #fbfbfb;
  font-size: 13px;
}
.task-search input::placeholder {
  color: #5c5c5c;
}
.app {
  position: relative;
  width: 36px;
  height: 40px;
  margin-right: 8px;
  border-radius: 4px;
}
.app::after {
  content: "";
  position: absolute;
  bottom: 0;
  left: 15px;
  width: 6px;
  height: 3px;
  border-radius: 2px;
  background: #8a8a8a;
}
.app.open {
  background: #f9f9f9;
}
.app.open::after {
  left: 10px;
  width: 16px;
  background: #0067c0;
}
.tray {
  display: flex;
  align-items: center;
  margin-left: 64px;
  gap: 7px;
}
.tray button:first-child {
  margin-right: 10px;
}
.tray button:nth-child(2) {
  margin-right: 7px;
}
.clock {
  margin-left: 8px;
  text-align: right;
}
.copilot {
  position: relative;
  margin: 0 2px 0 9px;
}
.copilot b {
  position: absolute;
  right: 2px;
  bottom: 0;
  padding: 0 2px;
  border-radius: 2px;
  background: #f7b92c;
  color: #2b1c00;
  font-size: 7px;
  line-height: 8px;
}
```
